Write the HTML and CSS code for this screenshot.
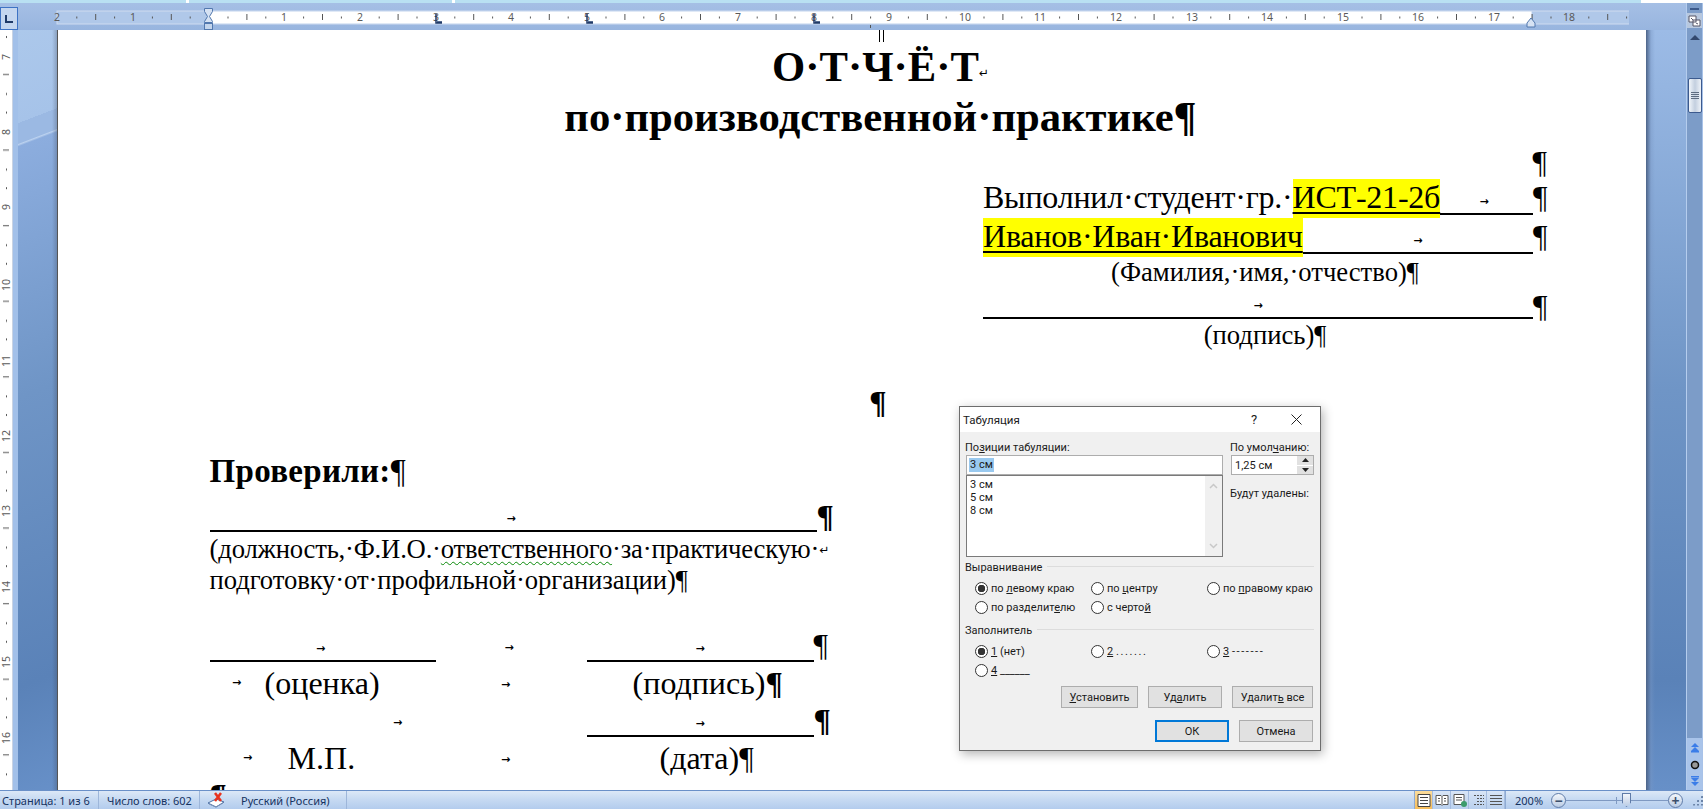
FILE: index.html
```html
<!DOCTYPE html>
<html lang="ru">
<head>
  <meta charset="UTF-8" />
  <title>Отчёт по практике – Word</title>
  <link rel="stylesheet" href="styles.css">
</head>
<body>

  <div class="top-strip"><span></span><span></span><span></span></div>

  <div class="main">
    <div class="work">

      <div class="ruler-row">
        <div class="corner"><svg width="10" height="10" viewBox="0 0 10 10"><path d="M2 1v7h7" fill="none" stroke="#1f3a68" stroke-width="2"/></svg></div>
        <svg class="h-ruler" width="1612" height="27" viewBox="0 0 1612 27">
          <defs>
            <pattern id="hticks" x="40.4" y="0" width="75.6" height="27" patternUnits="userSpaceOnUse">
              <rect x="18.9" y="13.500" width="1" height="2" fill="#555"/>
              <rect x="37.8" y="11" width="1" height="6" fill="#555"/>
              <rect x="56.7" y="13.500" width="1" height="2" fill="#555"/>
            </pattern>
          </defs>
          <rect x="40" y="8" width="1590" height="13" fill="#b0c8e9" stroke="#cfdcf0"/>
          <rect x="191.600" y="8.500" width="1323" height="12" fill="#fff"/>
          <rect x="40" y="8" width="1590" height="13" fill="url(#hticks)"/>
          <g class="ruler-num">
            <text x="40" y="18">2</text><text x="116" y="18">1</text>
            <text x="267" y="18">1</text><text x="343" y="18">2</text><text x="419" y="18">3</text><text x="494" y="18">4</text><text x="570" y="18">5</text>
            <text x="645" y="18">6</text><text x="721" y="18">7</text><text x="797" y="18">8</text><text x="872" y="18">9</text><text x="948" y="18">10</text>
            <text x="1023" y="18">11</text><text x="1099" y="18">12</text><text x="1175" y="18">13</text><text x="1250" y="18">14</text><text x="1326" y="18">15</text>
            <text x="1401" y="18">16</text><text x="1477" y="18">17</text><text x="1552" y="18">18</text>
          </g>
          <path d="M419 11v9h6M420 19h5M570 11v9h6M571 19h5M797 11v9h6M798 19h5" fill="none" stroke="#1f3a68" stroke-width="1.500"/>
          <path d="M853 22h1v3h-1z" fill="#555"/>
          <path d="M187.500 5.500h8v3l-3 5 3 5v1h-8v-1l3-5-3-5z" fill="#d6e2f3" stroke="#5278ae"/>
          <rect x="187.500" y="20.500" width="8" height="6" fill="#c4d5ec" stroke="#5278ae"/>
          <path d="M1510 24v-4l4-5 4 5v4z" fill="#d6e2f3" stroke="#5278ae"/>
        </svg>
      </div>

      <div class="doc-row">
        <svg class="v-ruler" width="13" height="760" viewBox="0 0 13 760">
          <defs>
            <pattern id="vticks" x="0" y="-2" width="13" height="75.6" patternUnits="userSpaceOnUse">
              <rect x="6" y="8" width="1" height="2" fill="#555"/>
              <rect x="3" y="46" width="6" height="1" fill="#555"/>
              <rect x="6" y="65" width="1" height="2" fill="#555"/>
            </pattern>
          </defs>
          <rect width="13" height="760" fill="#fff"/>
          <rect width="13" height="760" fill="url(#vticks)"/>
          <g class="ruler-num">
            <text transform="translate(10 27) rotate(-90)">7</text>
            <text transform="translate(10 102) rotate(-90)">8</text>
            <text transform="translate(10 177) rotate(-90)">9</text>
            <text transform="translate(10 255) rotate(-90)">10</text>
            <text transform="translate(10 331) rotate(-90)">11</text>
            <text transform="translate(10 406) rotate(-90)">12</text>
            <text transform="translate(10 481) rotate(-90)">13</text>
            <text transform="translate(10 557) rotate(-90)">14</text>
            <text transform="translate(10 632) rotate(-90)">15</text>
            <text transform="translate(10 708) rotate(-90)">16</text>
          </g>
        </svg>
        <div class="side side-left"></div>

        <div class="page">
          <span class="page-mark"></span>
          <h1 class="title">О·Т·Ч·Ё·Т<span class="br-mark">↵</span><br>по·производственной·практике¶</h1>

          <div class="signed">
            <div class="pil-only">¶</div>
            <div class="fill-line"><span>Выполнил·студент·гр.·</span><mark>ИСТ-21-2б</mark><span class="tab-fill fill-a"><i class="tab">→</i></span><span class="pil">¶</span></div>
            <div class="fill-line"><mark class="mark-name">Иванов·Иван·Иванович</mark><span class="tab-fill fill-b"><i class="tab">→</i></span><span class="pil">¶</span></div>
            <div class="cap">(Фамилия,·имя,·отчество)¶</div>
            <div class="fill-line line-sign"><span class="tab-fill"><i class="tab">→</i></span><span class="pil">¶</span></div>
            <div class="cap cap-sign">(подпись)¶</div>
          </div>

          <div class="mid-pil">¶</div>

          <div class="checked">
            <div class="checked-head">Проверили:<span class="thin">¶</span></div>
            <div class="fill-line line-who"><span class="tab-fill"><i class="tab">→</i></span><span class="pil pil-bold">¶</span></div>
            <p class="who"><span class="who-first">(должность,·Ф.И.О.·<span class="spell">ответственного</span>·за·практическую·</span><span class="br-mark">↵</span><br>подготовку·от·профильной·организации)¶</p>

            <div class="sign-grid">
              <span class="tab-fill tab-left"><i class="tab">→</i></span>
              <span class="tab-plain tab-left"><i class="tab">→</i></span>
              <span class="tab-fill"><i class="tab">→</i></span>
              <span class="pil">¶</span>

              <span class="cell-cap"><i class="tab">→</i><span class="cap-a">(оценка)</span></span>
              <span class="tab-plain tab-mid"><i class="tab">→</i></span>
              <span class="cell-text">(подпись)<b>¶</b></span>
              <span></span>

              <span class="tab-plain tab-end"><i class="tab">→</i></span>
              <span class="tab-plain"></span>
              <span class="tab-fill"><i class="tab">→</i></span>
              <span class="pil pil-bold">¶</span>

              <span class="cell-cap cell-cap-b"><i class="tab">→</i><span class="cap-b">М.П.</span></span>
              <span class="tab-plain tab-mid"><i class="tab">→</i></span>
              <span class="cell-text cell-date">(дата)¶</span>
              <span></span>
            </div>
            <div class="last-pil">¶</div>
          </div>
        </div>

        <div class="side side-right"></div>
      </div>
    </div>

    <div class="v-scroll">
      <div class="split-bar"></div>
      <div class="view-btn"><svg width="13" height="13" viewBox="0 0 13 13"><path d="M1 2h7v6H1zM5 6h7v6H5z" fill="#fff" stroke="#556" /><path d="M3 4l2 2M8 9l2 1" stroke="#556"/></svg></div>
      <div class="arrow-up"></div>
      <div class="thumb"><i></i><i></i><i></i><i></i></div>
      <div class="track"></div>
      <div class="browse">
        <svg width="10" height="10" viewBox="0 0 10 10"><path d="M5 0l4 4H1zM5 4l4 4H1z" fill="#3b7de8"/><rect x="1" y="8" width="8" height="1.500" fill="#3b7de8"/></svg>
        <svg width="10" height="10" viewBox="0 0 10 10"><circle cx="5" cy="5" r="3.500" fill="#999" stroke="#111" stroke-width="1.500"/></svg>
        <svg width="10" height="10" viewBox="0 0 10 10"><rect x="1" y="0" width="8" height="1.500" fill="#3b7de8"/><path d="M5 6L1 2h8zM5 10L1 6h8z" fill="#3b7de8"/></svg>
      </div>
    </div>
  </div>

  <footer class="status">
    <span class="st-item st-page">Страница: 1 из 6</span>
    <span class="st-item st-words">Число слов: 602</span>
    <span class="st-item st-lang">
      <svg width="18" height="16" viewBox="0 0 18 16"><path d="M1 11l8-4 8 3-8 5z" fill="#fff" stroke="#4a6fa5"/><path d="M2 12l7 3 7-4" fill="none" stroke="#7b93b8"/><path d="M8 1l6 8M14 1L8 9" stroke="#e8321e" stroke-width="2.500"/></svg>
      <span class="st-lang-name">Русский (Россия)</span>
    </span>
    <span class="st-grow"></span>
    <span class="views">
      <span class="view on"><svg width="14" height="13" viewBox="0 0 14 13"><path d="M1 .5h12v12H1zM3 3.500h8M3 6.500h8M3 9.500h8" fill="#fff" stroke="#444"/></svg></span>
      <span class="view"><svg width="14" height="13" viewBox="0 0 14 13"><path d="M1 1.500h5l1 1 1-1h5v9H8l-1 1-1-1H1zM7 2.500v8M3 4.500h2M3 7h2M9 4.500h2M9 7h2" fill="#fff" stroke="#555"/></svg></span>
      <span class="view"><svg width="14" height="13" viewBox="0 0 14 13"><path d="M1 .5h10v10H1zM3 3.500h6M3 6h6" fill="#fff" stroke="#555"/><circle cx="11" cy="10" r="3" fill="#3c9c6c"/></svg></span>
      <span class="view"><svg width="14" height="13" viewBox="0 0 14 13"><path d="M3 1.500h10M6 4.500h7M6 7.500h7M3 10.500h10" fill="none" stroke="#555" stroke-dasharray="2 1"/></svg></span>
      <span class="view"><svg width="14" height="13" viewBox="0 0 14 13"><path d="M1 1.500h12M1 4.500h12M1 7.500h12M1 10.500h12" fill="none" stroke="#555"/></svg></span>
    </span>
    <span class="zoom-val">200%</span>
    <span class="zoom-btn">−</span>
    <span class="slider"><i class="slider-mid"></i><i class="slider-thumb"></i></span>
    <span class="zoom-btn">+</span>
    <span class="grip"></span>
  </footer>

  <div class="dialog">
    <div class="dlg-title">
      <span class="dlg-name">Табуляция</span>
      <span class="dlg-help">?</span>
      <svg class="dlg-close" width="11" height="11" viewBox="0 0 11 11"><path d="M.5.5l10 10M10.500.5l-10 10" stroke="#222" fill="none"/></svg>
    </div>
    <div class="dlg-body">
      <div class="dlg-top">
        <div class="tabs-col">
          <div class="dlg-label">По<u>з</u>иции табуляции:</div>
          <div class="pos-input"><span class="sel">3 см</span></div>
          <div class="pos-list">
            <div class="pos-items"><div>3 см</div><div>5 см</div><div>8 см</div></div>
            <div class="pos-scroll">
              <svg width="9" height="6" viewBox="0 0 9 6"><path d="M1 5l3.500-3.500L8 5" fill="none" stroke="#c8c8c8" stroke-width="1.500"/></svg>
              <svg width="9" height="6" viewBox="0 0 9 6"><path d="M1 1l3.500 3.500L8 1" fill="none" stroke="#c8c8c8" stroke-width="1.500"/></svg>
            </div>
          </div>
        </div>
        <div class="default-col">
          <div class="dlg-label">По умол<u>ч</u>анию:</div>
          <div class="spin">
            <span class="spin-val">1,25 см</span>
            <span class="spin-btns">
              <span><svg width="7" height="4" viewBox="0 0 7 4"><path d="M3.500 0L7 4H0z" fill="#222"/></svg></span>
              <span><svg width="7" height="4" viewBox="0 0 7 4"><path d="M3.500 4L7 0H0z" fill="#222"/></svg></span>
            </span>
          </div>
          <div class="dlg-label remove-label">Будут удалены:</div>
        </div>
      </div>

      <div class="group-head group-align"><span>Выравнивание</span></div>
      <div class="radio-grid">
        <label class="radio on"><span>по <u>л</u>евому краю</span></label>
        <label class="radio"><span>по <u>ц</u>ентру</span></label>
        <label class="radio"><span>по <u>п</u>равому краю</span></label>
        <label class="radio"><span>по разделит<u>е</u>лю</span></label>
        <label class="radio"><span>с черто<u>й</u></span></label>
      </div>

      <div class="group-head group-fill"><span>Заполнитель</span></div>
      <div class="radio-grid">
        <label class="radio on"><span><u>1</u> (нет)</span></label>
        <label class="radio"><span><u>2</u> <span class="leader">.......</span></span></label>
        <label class="radio"><span><u>3</u> <span class="leader">-------</span></span></label>
        <label class="radio"><span><u>4</u> ______</span></label>
      </div>

      <div class="btn-row btn-row-a">
        <button class="btn btn-set"><u>У</u>становить</button>
        <button class="btn btn-del">Уд<u>а</u>лить</button>
        <button class="btn btn-all">Удалит<u>ь</u> все</button>
      </div>
      <div class="btn-row btn-row-b">
        <button class="btn btn-ok">ОК</button>
        <button class="btn btn-cancel">Отмена</button>
      </div>
    </div>
  </div>

</body>
</html>
```

FILE: styles.css
```css
html, body {
  margin: 0;
  padding: 0;
  height: 100%;
}

body {
  width: 1703px;
  height: 809px;
  overflow: hidden;
  display: flex;
  flex-direction: column;
  position: relative;
  font-family: "Noto Sans", sans-serif;
  background: #9fbae2;
}

/* top edge of the ribbon */
.top-strip {
  height: 3px;
  display: flex;
  flex-shrink: 0;
  gap: 3px;
  background: #fff;
}
.top-strip span { height: 3px; background: #b9e0f2; }
.top-strip span:nth-child(1) { width: 186px; }
.top-strip span:nth-child(2) { width: 263px; }
.top-strip span:nth-child(3) { flex: 1; margin-right: 62px; }

.main {
  flex: 1;
  min-height: 0;
  display: flex;
}
.work {
  flex: 1;
  min-width: 0;
  display: flex;
  flex-direction: column;
}

/* rulers */
.ruler-row {
  height: 27px;
  display: flex;
  flex-shrink: 0;
  background: linear-gradient(#a5bfe5, #98b5df);
}
.corner {
  width: 18px;
  height: 23px;
  margin-top: 4px;
  margin-right: -1px;
  box-sizing: border-box;
  border: 1px solid #3e73c4;
  background: #c4d6ef;
  display: flex;
  align-items: center;
  justify-content: center;
}
.ruler-num {
  font: 10.5px "Noto Sans", sans-serif;
  fill: #5a5a5a;
  text-anchor: middle;
}

.doc-row {
  flex: 1;
  min-height: 0;
  display: flex;
}
.v-ruler { flex-shrink: 0; }
.side { flex-shrink: 0; }
.side-left {
  width: 39px;
  border-left: 5px solid #a2c0e9;
  border-right: 1px solid #555;
  box-shadow: -1px 0 0 #c9d3e3;
  background:
    linear-gradient(90deg, transparent calc(100% - 5px), rgba(60,70,90,0.3)),
    linear-gradient(159deg, #acc8eb 0, #a6c3e9 87px, #9bb9e3 87px, #9bb9e3 106px, #bcd2ef 107px, #8cadde 109px, #6f95c6 343px, #5a82b8 614px, #6790c8 724px);
}
.side-right {
  width: 41px;
  background:
    linear-gradient(90deg, #4d6488, rgba(120,150,195,0.4) 5px, transparent 9px),
    linear-gradient(#9cbbe6, #6f95c6 360px, #5a82b8 650px, #6790c8 760px);
}

/* the document */
.page {
  width: 1588px;
  flex-shrink: 0;
  background: #fff;
  overflow: hidden;
  color: #000;
  font-family: "Liberation Serif", serif;
  font-size: 32px;
  line-height: 37px;
  position: relative;
}
.page-mark {
  position: absolute;
  left: 821px;
  top: 0;
  width: 3px;
  height: 12px;
  border-left: 1.500px solid #000;
  border-right: 1.500px solid #000;
}
.title {
  margin: 0;
  padding: 11.500px 0 0 57px;
  text-align: center;
  font-size: 42.67px;
  line-height: 50px;
  font-weight: bold;
}
.br-mark {
  font-family: "DejaVu Sans", sans-serif;
  font-size: 12px;
  font-weight: normal;
  line-height: 0;
  vertical-align: 4px;
}
.signed {
  margin: 0 99px 0 925px;
}
.pil-only {
  text-align: right;
  height: 35px;
  padding-top: 2px;
  white-space: nowrap;
}
.fill-line {
  display: flex;
  white-space: nowrap;
  letter-spacing: -0.22px;
}
.fill-line > span:first-child { white-space: pre; }
mark {
  background: #ff0;
  padding-bottom: 2px;
  text-decoration: underline;
  text-decoration-thickness: 2px;
  text-underline-offset: 4px;
}
.tab-fill {
  flex: 1;
  align-self: stretch;
  display: flex;
  align-items: flex-end;
  justify-content: center;
  border-bottom: 2px solid #000;
  margin-bottom: 2.500px;
  padding-bottom: 5px;
  box-sizing: border-box;
}
.tab, .tab-plain .tab {
  font: bold 11px/12px "DejaVu Sans", sans-serif;
  width: 10px;
  text-align: center;
}
.fill-a { justify-content: flex-end; padding-right: 44px; }
.fill-b { justify-content: center; }
.pil {
  width: 14px;
}
.pil-bold { font-weight: bold; }
.cap {
  font-size: 26.67px;
  line-height: 31px;
  text-align: center;
}
.line-sign { height: 34px; }
.cap-sign { margin-top: -2px; }

.mid-pil {
  margin-top: 33.500px;
  text-align: center;
  padding-left: 52px;
  font-weight: bold;
}

.checked { margin: 0 0 0 151.600px; }
.checked-head {
  margin-top: 32px;
  font-weight: bold;
  font-size: 33px;
  letter-spacing: 0.3px;
}
.thin { font-weight: normal; }
.line-who { width: 621px; height: 37px; margin-top: 7.500px; }
.line-who .tab-fill { padding-right: 4px; }
.who {
  margin: -1px 0 0;
  font-size: 26.67px;
  line-height: 31px;
  letter-spacing: -0.1px;
  white-space: nowrap;
}
.who-first { letter-spacing: -0.2px; }
.spell {
  text-decoration: underline wavy #0a8a0a 1px;
  text-underline-offset: 3px;
}

.sign-grid {
  display: grid;
  grid-template-columns: 226px 151px 227px 14px;
  grid-auto-rows: 37.5px;
  width: 618px;
  margin-top: 31.500px;
}
.tab-plain {
  display: flex;
  align-items: flex-end;
  justify-content: center;
  padding-bottom: 10.500px;
  box-sizing: border-box;
}
.tab-left { padding-right: 4px; }
.tab-mid { padding-right: 11px; padding-bottom: 11px; }
.tab-end { justify-content: flex-end; padding-right: 33px; }
.cell-cap {
  display: flex;
  align-items: center;
  padding-left: 22px;
}
.cell-cap-b { padding-left: 33px; }
.cap-a { margin-left: 23px; }
.cap-b { margin-left: 35px; }
.cell-text { white-space: nowrap; padding-left: 46px; }
.cell-date { padding-left: 73px; }
.last-pil { font-weight: bold; }

/* vertical scroll bar */
.v-scroll {
  width: 17px;
  flex-shrink: 0;
  display: flex;
  flex-direction: column;
  align-items: center;
  background: #7c9cc8;
  border-left: 1px solid #b5cdee;
  border-right: 1px solid #a8c2e8;
  box-sizing: border-box;
}
.split-bar {
  width: 9px;
  height: 2px;
  margin-top: 5px;
  background: #3d5a8a;
}
.view-btn {
  width: 15px;
  height: 15px;
  margin-top: 3px;
  background: #b8c8de;
  display: flex;
  align-items: center;
  justify-content: center;
}
.arrow-up {
  margin-top: 7px;
  border-left: 5px solid transparent;
  border-right: 5px solid transparent;
  border-bottom: 5px solid #33486d;
}
.thumb {
  width: 14px;
  height: 35px;
  margin-top: 38px;
  box-sizing: border-box;
  border: 1px solid #3c5a8e;
  border-radius: 2px;
  background: linear-gradient(90deg, #f1f5fa, #c3cfdf 50%, #eef2f8);
  display: flex;
  flex-direction: column;
  justify-content: center;
  align-items: center;
  gap: 1px;
}
.thumb i { width: 8px; height: 1px; background: #5e6c80; }
.track { flex: 1; }
.browse {
  height: 52px;
  width: 100%;
  background: #a9c4ea;
  display: flex;
  flex-direction: column;
  align-items: center;
  justify-content: space-between;
  padding: 5px 0 4px;
  box-sizing: border-box;
}

/* status bar */
.status {
  height: 19px;
  flex-shrink: 0;
  display: flex;
  align-items: center;
  box-sizing: border-box;
  border-top: 1px solid #6a90c8;
  background: linear-gradient(#dce8f7, #c7daf2 45%, #b3cced);
  font-size: 11px;
  color: #15325f;
}
.st-item {
  height: 100%;
  display: flex;
  align-items: center;
  box-sizing: border-box;
  border-right: 1px solid #9db6da;
  white-space: nowrap;
}
.st-page { width: 99px; padding-left: 2px; }
.st-words { width: 101px; padding-left: 8px; }
.st-lang { width: 147px; padding-left: 7px; }
.st-lang-name { margin-left: 16px; }
.st-grow { flex: 1; }
.views {
  width: 92px;
  height: 100%;
  display: flex;
  box-sizing: border-box;
  border: 1px solid #8fabd3;
  border-width: 0 1px;
  background: linear-gradient(#d8e5f6, #b9d0ee);
  margin-right: 1px;
}
.view {
  width: 18px;
  display: flex;
  align-items: center;
  justify-content: center;
  border-right: 1px solid #a5bcdf;
}
.view.on { background: linear-gradient(#fbdc9c, #f6bd5b); }
.zoom-val {
  margin-left: 8px;
  width: 36px;
  font-size: 11px;
  color: #15325f;
}
.zoom-btn {
  width: 15px;
  height: 15px;
  border: 1px solid #5f7ba8;
  border-radius: 50%;
  background: linear-gradient(#f4f7fb, #b9cbe4);
  font: bold 14px/14px "Noto Sans", sans-serif;
  text-align: center;
  color: #3d4f6c;
  flex-shrink: 0;
  box-sizing: border-box;
}
.slider {
  width: 102px;
  height: 1px;
  background: #7f99c2;
  display: flex;
  align-items: center;
  position: relative;
}
.slider-mid {
  width: 1px;
  height: 7px;
  margin-left: 50px;
  background: #7f99c2;
}
.slider-thumb {
  width: 9px;
  height: 14px;
  margin-left: 5px;
  background: linear-gradient(#f3f6fb, #bccde5);
  border: 1px solid #5f7ba8;
  box-sizing: border-box;
  clip-path: polygon(0 0, 100% 0, 100% 70%, 50% 100%, 0 70%);
}
.grip {
  width: 11px;
  height: 11px;
  margin-left: 9px;
  background: radial-gradient(circle, #6b84a8 1px, transparent 1.5px) 0 0 / 4px 4px;
  clip-path: polygon(100% 0, 100% 100%, 0 100%);
}

/* tab settings dialog, floats over the document */
.dialog {
  position: absolute;
  left: 959px;
  top: 406px;
  width: 362px;
  height: 345px;
  box-sizing: border-box;
  border: 1px solid #6d6d6d;
  background: #f0f0f0;
  box-shadow: 2px 3px 10px rgba(0,0,0,0.3);
  font-family: Roboto, sans-serif;
  font-size: 11px;
  color: #1a1a1a;
  display: flex;
  flex-direction: column;
}
.dlg-title {
  height: 25px;
  flex-shrink: 0;
  background: #fff;
  display: flex;
  align-items: center;
  padding-left: 3px;
  font-size: 11.5px;
}
.dlg-name { width: 288px; }
.dlg-help { width: 40px; font-size: 13px; }
.dlg-body { padding: 8px 6px 0 5px; flex: 1; }
.dlg-top { display: flex; gap: 8px; }
.tabs-col { width: 257px; padding-left: 1px; }
.default-col { flex: 1; }
.dlg-label { height: 15px; line-height: 15px; margin-left: -1px; white-space: nowrap; }
.pos-input {
  height: 20px;
  box-sizing: border-box;
  border: 1px solid #adadad;
  background: #fff;
  padding: 2px 2px;
  line-height: 14px;
}
.sel { background: #99c9ef; display: inline-block; padding: 0 1px; }
.pos-list {
  height: 82px;
  box-sizing: border-box;
  border: 1px solid #7a7a7a;
  background: #fff;
  display: flex;
}
.pos-items { flex: 1; padding: 2px 2px 0 3px; line-height: 13px; }
.pos-scroll {
  width: 17px;
  background: #f0f0f0;
  display: flex;
  flex-direction: column;
  justify-content: space-between;
  align-items: center;
  padding: 7px 0;
  box-sizing: border-box;
}
.spin {
  width: 83px;
  height: 20px;
  box-sizing: border-box;
  border: 1px solid #adadad;
  background: #fff;
  display: flex;
  align-items: center;
  justify-content: space-between;
  padding-left: 3px;
}
.spin-btns {
  width: 16px;
  height: 18px;
  display: flex;
  flex-direction: column;
  gap: 1px;
  background: #fff;
}
.spin-btns span {
  flex: 1;
  background: #e1e1e1;
  display: flex;
  align-items: center;
  justify-content: center;
}
.remove-label { margin-top: 11px; }

.group-head {
  display: flex;
  align-items: center;
  gap: 5px;
  height: 15px;
  line-height: 15px;
}
.group-head span { padding-top: 2px; }
.group-head::after {
  content: "";
  flex: 1;
  height: 1px;
  background: #dcdcdc;
}
.group-align { margin-top: 2px; }
.group-fill { margin-top: 5px; }
.radio-grid {
  display: grid;
  grid-template-columns: 116px 116px 1fr;
  grid-auto-rows: 19px;
  padding-left: 10px;
  margin-top: 5px;
}
.radio {
  display: flex;
  align-items: center;
  gap: 3px;
  white-space: pre;
}
.radio::before {
  content: "";
  width: 13px;
  height: 13px;
  box-sizing: border-box;
  border: 1px solid #333;
  border-radius: 50%;
  background: #fff;
  flex-shrink: 0;
}
.radio.on::before {
  background: radial-gradient(circle, #333 3.5px, #fff 4px);
}
.leader { letter-spacing: 1.6px; }
.btn-row { display: flex; justify-content: flex-end; gap: 10px; }
.btn-row-a { margin-top: 6px; padding-right: 1px; }
.btn-row-b { margin-top: 12px; padding-right: 1px; }
.btn {
  height: 22px;
  padding: 0;
  box-sizing: border-box;
  border: 1px solid #adadad;
  background: #e1e1e1;
  font: 11px Roboto, sans-serif;
  color: #1a1a1a;
}
.btn-set { width: 77px; }
.btn-del { width: 74px; }
.btn-all { width: 81px; }
.btn-ok { width: 74px; border: 2px solid #0078d7; }
.btn-cancel { width: 74px; }
```
